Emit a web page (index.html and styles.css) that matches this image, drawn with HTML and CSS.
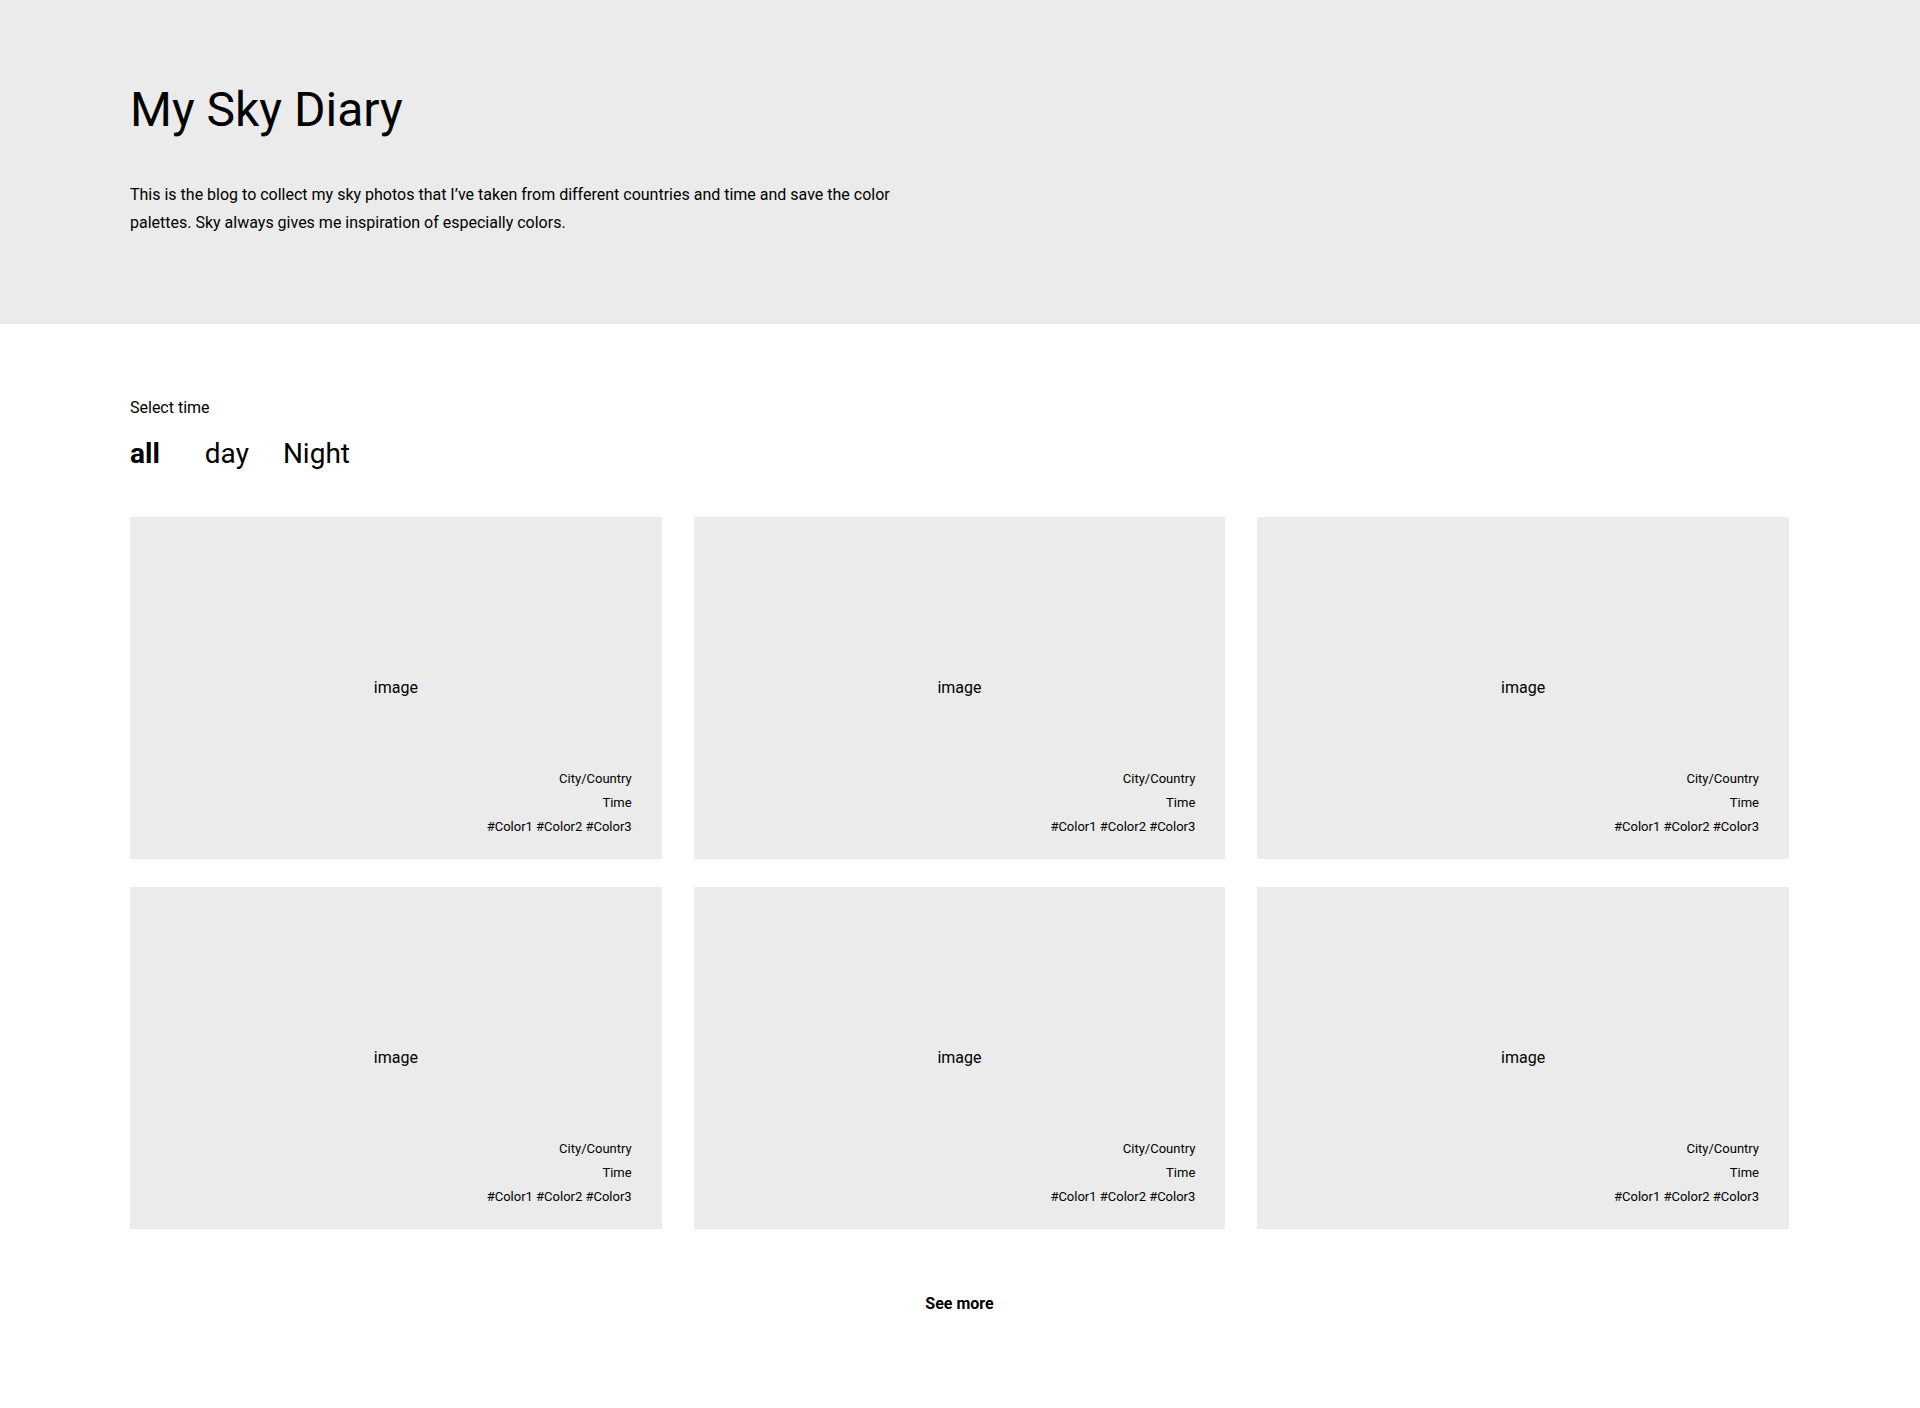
FILE: index.html
```html
<!DOCTYPE html>
<html lang="en">
<head>
<meta charset="utf-8">
<title>My Sky Diary</title>
<link rel="stylesheet" href="styles.css">
</head>
<body>
<header class="hero">
  <h1 class="hero-title">My Sky Diary</h1>
  <p class="hero-text">This is the blog to collect my sky photos that I’ve taken from different countries and time and save the color palettes. Sky always gives me inspiration of especially colors.</p>
</header>
<main class="content">
  <div class="filter-label">Select time</div>
  <nav class="tabs">
    <span class="tab tab-active">all</span>
    <span class="tab">day</span>
    <span class="tab">Night</span>
  </nav>
  <section class="grid">
    <article class="card">
      <div class="card-image">image</div>
      <div class="card-meta"><div>City/Country</div><div>Time</div><div>#Color1 #Color2 #Color3</div></div>
    </article>
    <article class="card">
      <div class="card-image">image</div>
      <div class="card-meta"><div>City/Country</div><div>Time</div><div>#Color1 #Color2 #Color3</div></div>
    </article>
    <article class="card">
      <div class="card-image">image</div>
      <div class="card-meta"><div>City/Country</div><div>Time</div><div>#Color1 #Color2 #Color3</div></div>
    </article>
    <article class="card">
      <div class="card-image">image</div>
      <div class="card-meta"><div>City/Country</div><div>Time</div><div>#Color1 #Color2 #Color3</div></div>
    </article>
    <article class="card">
      <div class="card-image">image</div>
      <div class="card-meta"><div>City/Country</div><div>Time</div><div>#Color1 #Color2 #Color3</div></div>
    </article>
    <article class="card">
      <div class="card-image">image</div>
      <div class="card-meta"><div>City/Country</div><div>Time</div><div>#Color1 #Color2 #Color3</div></div>
    </article>
  </section>
  <div class="more"><span class="more-link">See more</span></div>
</main>
</body>
</html>
```
FILE: styles.css
```css
* { box-sizing: border-box; }
html, body {
  margin: 0;
  padding: 0;
  background: #ffffff;
  color: #000000;
  font-family: Roboto, "Liberation Sans", Arial, sans-serif;
}
.hero {
  background: #ebebeb;
  height: 324px;
  padding: 82px 130px 0 130px;
}
.hero-title {
  margin: 0;
  font-size: 48px;
  font-weight: 400;
  line-height: 56px;
}
.hero-text {
  margin: 43px 0 0 0;
  max-width: 780px;
  font-size: 16px;
  line-height: 28px;
}
.content {
  padding: 74px 131px 90px 130px;
}
.filter-label {
  font-size: 16px;
  line-height: 20px;
}
.tabs {
  display: flex;
  margin-top: 19px;
  font-size: 28px;
  line-height: 34px;
}
.tab { margin-right: 34px; }
.tab-active { font-weight: 700; margin-right: 45px; }
.grid {
  margin-top: 46px;
  display: grid;
  grid-template-columns: repeat(3, 1fr);
  grid-auto-rows: 342px;
  column-gap: 32px;
  row-gap: 28px;
}
.card {
  background: #ebebeb;
  display: grid;
  padding: 0 30px 20px 30px;
}
.card-image, .card-meta { grid-area: 1 / 1; }
.card-image {
  align-self: center;
  justify-self: center;
  font-size: 16px;
  line-height: 20px;
  padding-top: 20px;
}
.card-meta {
  align-self: end;
  justify-self: end;
  text-align: right;
  font-size: 13px;
  line-height: 24px;
}
.more {
  margin-top: 65px;
  text-align: center;
  font-size: 16px;
  line-height: 20px;
  font-weight: 700;
}
```
